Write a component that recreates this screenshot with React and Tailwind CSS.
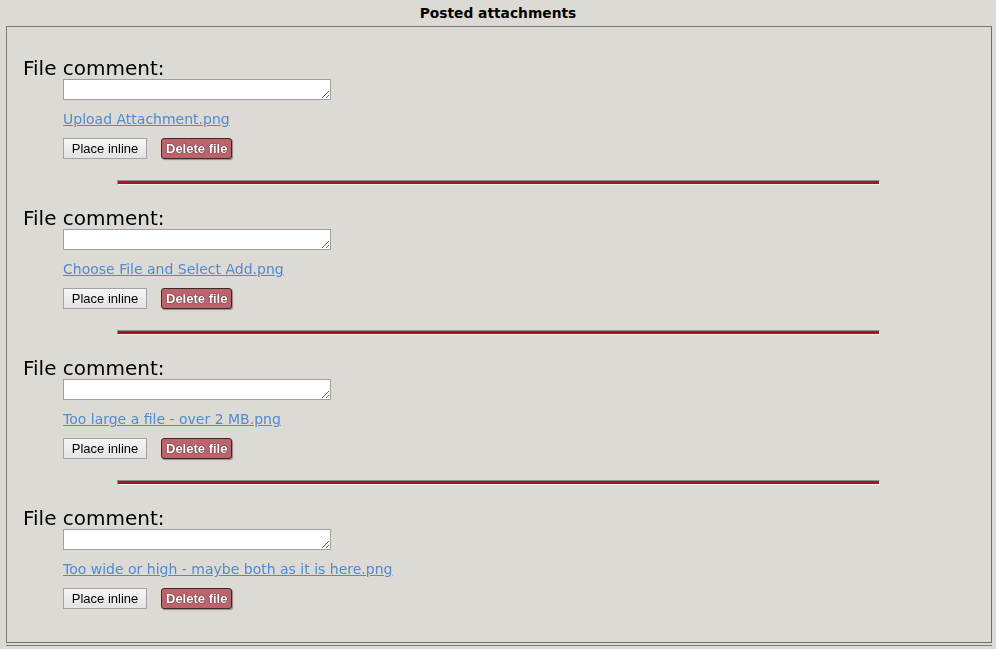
import React from "react";

// Files already attached to the post
const attachments = [
  "Upload Attachment.png",
  "Choose File and Select Add.png",
  "Too large a file - over 2 MB.png",
  "Too wide or high - maybe both as it is here.png",
];

const verdana = { fontFamily: "'DejaVu Sans', Verdana, sans-serif" };
const arial = { fontFamily: "'Liberation Sans', Arial, sans-serif" };

const Divider = () => (
  <div className="ml-[110px] mt-[21px] h-[5px] w-[763px] border border-t-[#8c8c8c] border-l-[#8c8c8c] border-b-[#f4f2ef] border-r-[#f4f2ef] bg-[#9b1a2b]" />
);

const AttachmentRow = ({ name, last }) => (
  <div>
    <div className="pl-[16px] text-[20px] leading-[23px] text-black" style={verdana}>
      File comment:
    </div>
    <div className="ml-[56px]">
      <textarea
        className="-mt-px block h-[21px] w-[268px] resize-y border border-[#a0a0a0] bg-white p-0 outline-none"
        rows={1}
      />
      <a
        href="#"
        className="mt-[11px] block w-fit text-[14px] leading-[17px] text-[#4f8bd0] underline"
        style={verdana}
      >
        {name}
      </a>
      <div className="mt-[10px] flex items-center gap-[14px]" style={arial}>
        <button className="h-[21px] w-[84px] border border-[#a3a3a3] bg-gradient-to-b from-[#f6f6f6] to-[#e3e3e3] text-[13px] text-black">
          Place inline
        </button>
        <button
          className="h-[21px] rounded-[3px] border border-[#3a2a2a] bg-[#bd636c] px-[4px] text-[13px] font-bold text-white shadow-[1px_1px_1px_rgba(0,0,0,0.35)]"
          style={{ textShadow: "0 0 1px #3b1b20, 0 0 1px #3b1b20" }}
        >
          Delete file
        </button>
      </div>
    </div>
    {!last && <Divider />}
  </div>
);

export default function App() {
  return (
    <div className="min-h-screen w-[996px] bg-[#dddad5]">
      <div
        className="h-[26px] pt-[4px] text-center text-[13.8px] font-bold leading-[18px] text-black"
        style={verdana}
      >
        Posted attachments
      </div>
      <div className="ml-[6px] mr-[4px] border border-t-[#7a7a7a] border-l-[#7a7a7a] border-b-[#6e6e6e] border-r-[#6e6e6e] pb-[33px] pt-[30px]">
        <div className="flex flex-col gap-[22px]">
          {attachments.map((name, i) => (
            <AttachmentRow key={name} name={name} last={i === attachments.length - 1} />
          ))}
        </div>
      </div>
      <div className="ml-[6px] mr-[4px] mt-[2px] h-[20px] border-t border-[#7a7a7a]" />
    </div>
  );
}
